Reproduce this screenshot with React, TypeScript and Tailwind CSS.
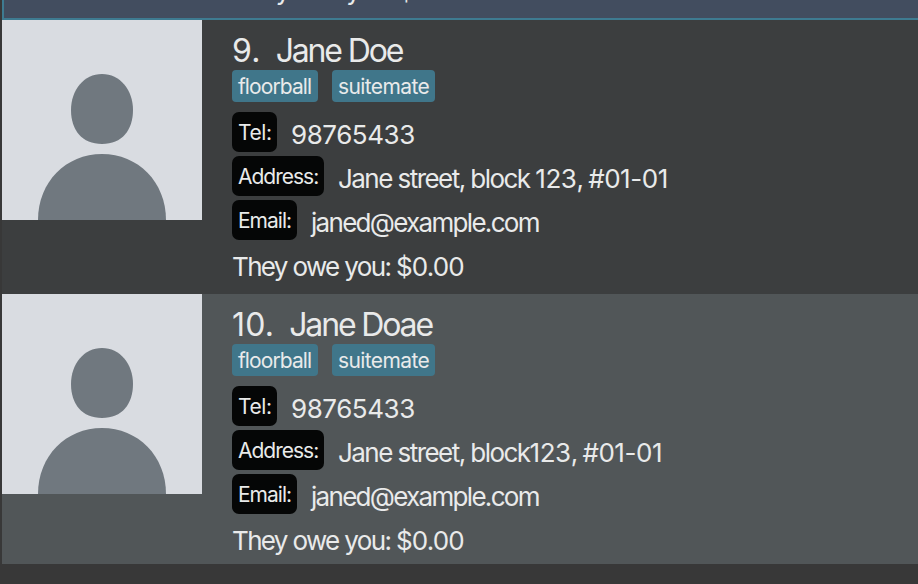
import React from "react";

type Person = { index: number; name: string; tags: string[]; tel: string; address: string; email: string; owed: string };

const people: Person[] = [
  { index: 9, name: "Jane Doe", tags: ["floorball", "suitemate"], tel: "98765433", address: "Jane street, block 123, #01-01", email: "janed@example.com", owed: "$0.00" },
  { index: 10, name: "Jane Doae", tags: ["floorball", "suitemate"], tel: "98765433", address: "Jane street, block123, #01-01", email: "janed@example.com", owed: "$0.00" },
];

const tagStyles: Record<string, string> = {
  floorball: "w-[86px] tracking-[-0.9px]",
  suitemate: "w-[103px] tracking-[-0.6px]",
};

function Avatar() {
  return (
    <svg width="200" height="200" viewBox="0 0 200 200" className="block shrink-0 bg-[#d9dce1]" fill="#70787f">
      <path d="M100 54C118 54 131 70 131 90C131 110 120 124 100 124C80 124 69 110 69 90C69 70 82 54 100 54Z" />
      <path d="M36 200C36 162 64 134 100 134C136 134 164 162 164 200Z" />
    </svg>
  );
}

/** Sets figures a little looser than the words around them. */
function Mixed({ text, words = "tracking-[-1.5px]" }: { text: string; words?: string }) {
  return (
    <>
      {text.split(/([#$]?\d[\d.\-]*)/).map((run, i) => (
        <span key={i} className={i % 2 === 1 ? "tracking-[-0.45px]" : words}>{run}</span>
      ))}
    </>
  );
}

function Owed({ amount }: { amount: string }) {
  return (
    <>
      <span className="tracking-[-1.65px]">They owe you: </span>
      <span className="tracking-[-0.8px]">{amount}</span>
    </>
  );
}

function Field({ label, value, labelStyle, words }: { label: string; value: string; labelStyle: string; words?: string }) {
  return (
    <div className="flex h-10 items-start">
      <span className={`h-10 rounded-[7px] bg-[#050606] pl-1.5 text-[21px] leading-[41px] ${labelStyle}`}>{label}</span>
      <span className="ml-3.5 text-[26px] leading-[45px]"><Mixed text={value} words={words} /></span>
    </div>
  );
}

function PersonCard({ person, shade }: { person: Person; shade: string }) {
  return (
    <div className={`flex h-[274px] shrink-0 ${shade}`}>
      <Avatar />
      <div className="ml-[30px] pt-3">
        <h2 className="flex h-[38px] text-[32px] leading-[38px]">
          <span className="tracking-[0.2px]">{person.index}.</span>
          <span className="ml-[15px] tracking-[-2.15px]">{person.name}</span>
        </h2>
        <div className="flex gap-3.5">
          {person.tags.map((tag) => (
            <span key={tag} className={`h-8 rounded-[4px] bg-[#40768a] pl-1.5 text-[21px] leading-[33px] ${tagStyles[tag]}`}>{tag}</span>
          ))}
        </div>
        <div className="mt-2.5 flex flex-col gap-1">
          <Field label="Tel:" value={person.tel} labelStyle="w-[45px] tracking-[-0.4px]" />
          <Field label="Address:" value={person.address} labelStyle="w-[92px] tracking-[-1px]" words="tracking-[-1.55px]" />
          <Field label="Email:" value={person.email} labelStyle="w-[65px] tracking-[-1px]" words="tracking-[-1.7px]" />
        </div>
        <p className="mt-1 text-[26px] leading-[45px]"><Owed amount={person.owed} /></p>
      </div>
    </div>
  );
}

export default function App() {
  return (
    <div className="h-[584px] w-[918px] overflow-hidden bg-[#383838] pl-0.5 font-['Inter',sans-serif] font-normal whitespace-nowrap text-[#e9eaea]">
      <div className="flex h-[564px] flex-col overflow-hidden">
        <div className="flex h-5 shrink-0 items-end overflow-hidden border-b-2 border-l-2 border-[#3e7b91] bg-[#424d5f] pl-[230px]">
          <p className="mb-[5px] text-[26px] leading-[45px]"><Owed amount="$0.00" /></p>
        </div>
        {people.map((person, i) => (
          <PersonCard key={person.index} person={person} shade={i % 2 === 0 ? "bg-[#3c3e3f]" : "bg-[#515658]"} />
        ))}
      </div>
    </div>
  );
}
